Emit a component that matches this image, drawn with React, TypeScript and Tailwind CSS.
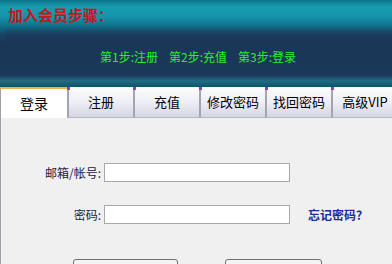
import React from "react";

const tabs = ["登录", "注册", "充值", "修改密码", "找回密码", "高级VIP"];

export default function App() {
  return (
    <div className="w-[392px] h-[264px] overflow-hidden bg-[#f0f0f0] font-['Noto_Sans_CJK_SC',sans-serif]">
      {/* header */}
      <div className="h-[87px] bg-[linear-gradient(to_bottom,#0b7488_0%,#189cb0_8%,#1592a8_20%,#0f6a84_32%,#1b4262_40%,#1a3658_50%,#1a3858_86%,#1f6c84_93%,#0c5566_100%)]">
        <div className="pl-[8px] pt-[6px] h-[25px] text-[15px] leading-[18px] font-bold text-[#c8141e]">
          加入会员步骤：
        </div>
        <div className="ml-[5px] h-[52px] bg-[linear-gradient(to_bottom,rgba(26,54,88,0)_0%,rgba(26,54,88,0.6)_25%,#1a3658_40%,#1a3858_80%,rgba(26,60,90,0)_100%)]">
          <div className="flex gap-[11px] pl-[95px] pt-[24px] text-[12px] leading-[16px] text-[#26f226]">
            <span>第1步:注册</span>
            <span>第2步:充值</span>
            <span>第3步:登录</span>
          </div>
        </div>
      </div>

      {/* tabs */}
      <div className="flex h-[31px]">
        {tabs.map((t, i) =>
          i === 0 ? (
            <div
              key={t}
              className="w-[67px] shrink-0 flex items-center justify-center border-t-2 border-t-[#f2b04c] border-l border-l-[#a0a0a8] bg-white text-[14px] text-black"
            >
              {t}
            </div>
          ) : (
            <div
              key={t}
              className="relative w-[66px] shrink-0 flex items-center justify-center border-l-2 border-l-[#a4a4ac] border-b border-b-[#b8b8c4] bg-[linear-gradient(to_bottom,#fdfdff,#eeeef6_50%,#d6d6e4)] text-[13px] text-black"
            >
              <span className="absolute -left-[2px] top-0 w-[3px] h-[3px] bg-[#9a34c4]" />
              {t}
            </div>
          )
        )}
      </div>

      {/* form */}
      <div className="border-l border-l-[#a0a0a8] h-[146px] pt-[45px] text-[12px] text-[#22223e]">
        <div className="flex items-center h-[19px]">
          <div className="w-[100px] text-right">邮箱/帐号:</div>
          <input className="ml-[3px] w-[186px] h-[19px] bg-white border border-[#a8a8a8]" />
        </div>
        <div className="flex items-center h-[19px] mt-[23px]">
          <div className="w-[100px] text-right">密码:</div>
          <input className="ml-[3px] w-[186px] h-[19px] bg-white border border-[#a8a8a8]" />
          <a className="ml-[18px] text-[#1c2a9c] font-bold">忘记密码?</a>
        </div>
        <div className="flex mt-[35px]">
          <div className="ml-[72px] w-[105px] h-[22px] rounded-[3px] border border-[#707070] bg-[#f4f4f4]" />
          <div className="ml-[47px] w-[97px] h-[22px] rounded-[3px] border border-[#707070] bg-[#f4f4f4]" />
        </div>
      </div>
    </div>
  );
}
